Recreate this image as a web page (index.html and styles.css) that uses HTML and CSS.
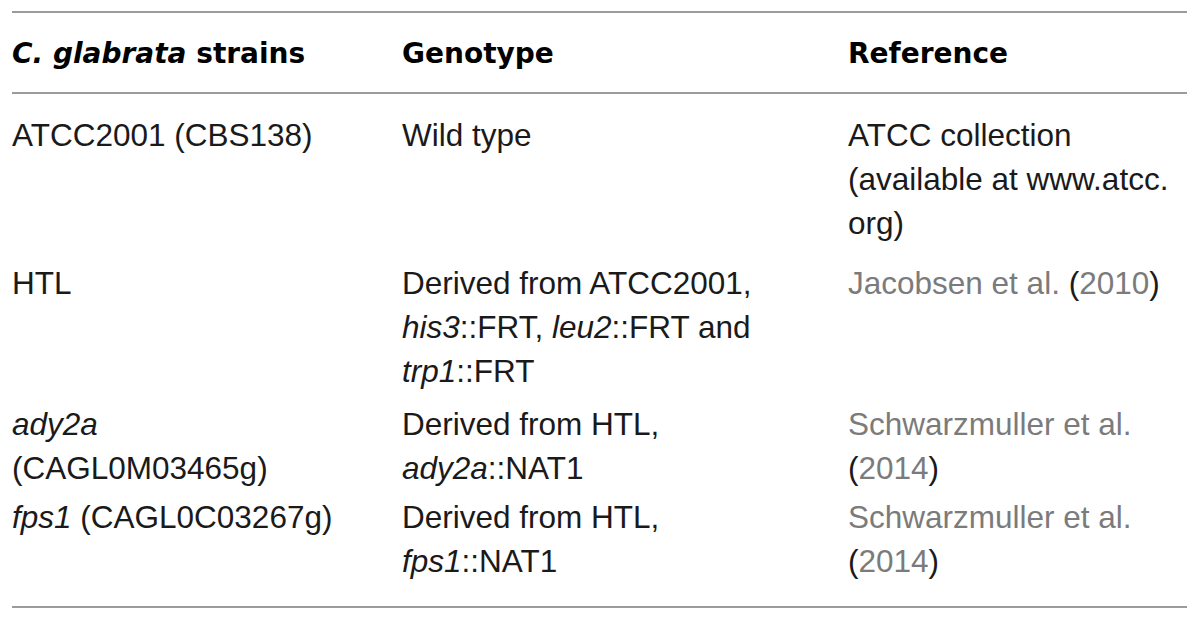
FILE: index.html
```html
<!DOCTYPE html>
<html lang="en">
<head>
<meta charset="utf-8">
<title>C. glabrata strains</title>
<link rel="stylesheet" href="styles.css">
</head>
<body>
<div class="page">
  <table class="strains">
    <colgroup>
      <col class="c1">
      <col class="c2">
      <col class="c3">
    </colgroup>
    <thead>
      <tr>
        <th><i>C. glabrata</i> strains</th>
        <th>Genotype</th>
        <th>Reference</th>
      </tr>
    </thead>
    <tbody>
      <tr class="r1">
        <td>ATCC2001 (CBS138)</td>
        <td>Wild type</td>
        <td>ATCC collection<br>(available at www.atcc.<br>org)</td>
      </tr>
      <tr class="r2">
        <td>HTL</td>
        <td>Derived from ATCC2001,<br><i>his3</i>::FRT, <i>leu2</i>::FRT and<br><i>trp1</i>::FRT</td>
        <td><span class="ref">Jacobsen et al.</span> (<span class="ref">2010</span>)</td>
      </tr>
      <tr class="r3">
        <td><i>ady2a</i><br>(CAGL0M03465g)</td>
        <td>Derived from HTL,<br><i>ady2a</i>::NAT1</td>
        <td><span class="ref">Schwarzmuller et al.</span><br>(<span class="ref">2014</span>)</td>
      </tr>
      <tr class="r4">
        <td><i>fps1</i> (CAGL0C03267g)</td>
        <td>Derived from HTL,<br><i>fps1</i>::NAT1</td>
        <td><span class="ref">Schwarzmuller et al.</span><br>(<span class="ref">2014</span>)</td>
      </tr>
    </tbody>
  </table>
</div>
</body>
</html>
```

FILE: styles.css
```css
html, body {
  margin: 0;
  padding: 0;
  background: #ffffff;
}

.page {
  padding: 11px 13px 0 12px;
}

.strains {
  width: 1175px;
  border-collapse: collapse;
  border-top: 2px solid #9b9b9b;
  border-bottom: 2px solid #9b9b9b;
  font-family: "Liberation Sans", Arial, sans-serif;
  font-size: 31.5px;
  line-height: 44px;
  color: #1a1a1a;
}

.c1 { width: 390px; }
.c2 { width: 446px; }
.c3 { width: 339px; }

.strains th {
  font-family: "DejaVu Sans", "Liberation Sans", sans-serif;
  font-size: 28px;
  font-weight: bold;
  color: #000;
  text-align: left;
  padding: 19px 0 16px 0;
  border-bottom: 2px solid #9b9b9b;
  vertical-align: middle;
}

.strains td {
  text-align: left;
  vertical-align: top;
  padding: 0;
}

.r1 td { padding-top: 19px; padding-bottom: 8px; }
.r2 td { padding-top: 8px; padding-bottom: 5px; }
.r3 td { padding-top: 4px; padding-bottom: 2px; }
.r4 td { padding-top: 3px; padding-bottom: 23px; }

.ref {
  color: #7b7b7b;
}
```
